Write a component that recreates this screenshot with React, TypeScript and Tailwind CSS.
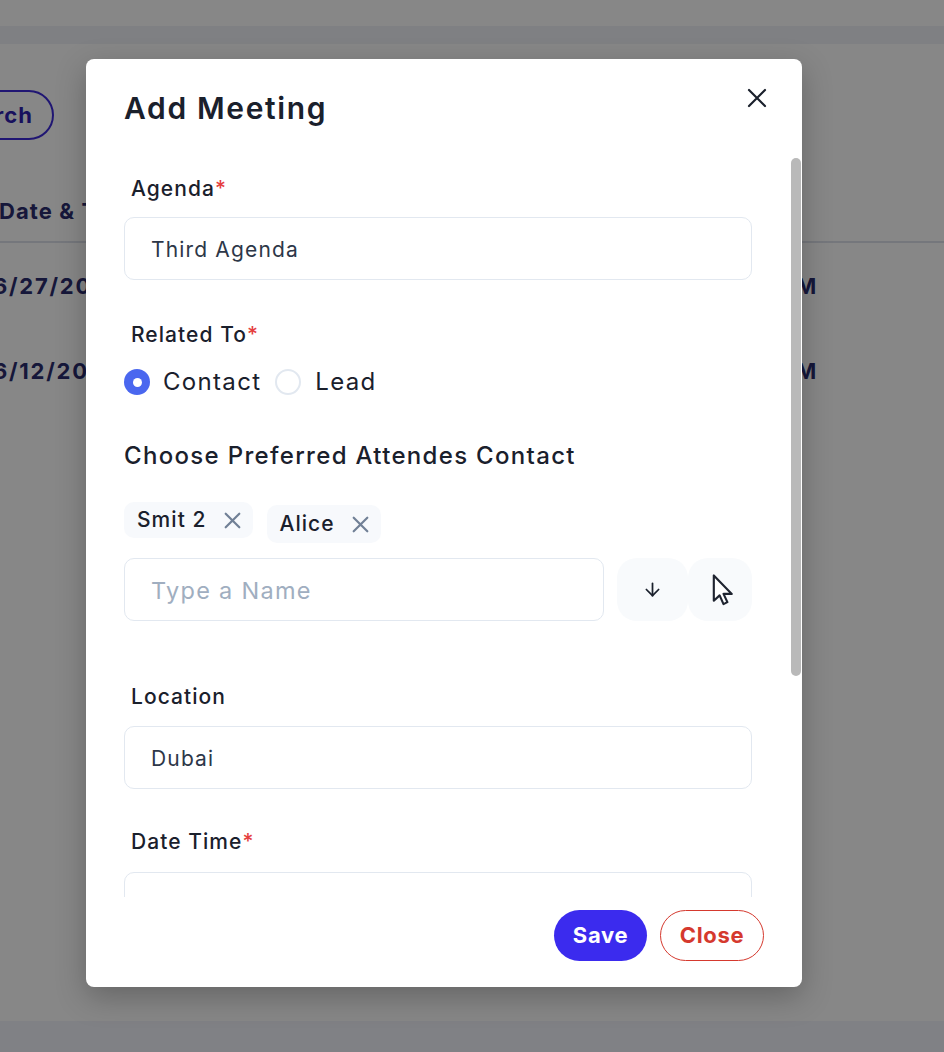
import { ArrowDown } from "lucide-react";

function CrossIcon({ className }: { className?: string }) {
  return (
    <svg viewBox="0 0 20 20" className={className} fill="none" stroke="currentColor" strokeLinecap="round">
      <path d="M2 2 L18 18 M18 2 L2 18" />
    </svg>
  );
}

function Label({ text, required }: { text: string; required?: boolean }) {
  return (
    <div className="pl-[7px] pt-[1px] text-[21px] leading-[28px] font-medium tracking-[0.05em] text-[#1a202c]">
      {text}
      {required && <span className="text-[#e53e3e]">*</span>}
    </div>
  );
}

function TextBox({ value, placeholder, className }: { value?: string; placeholder?: string; className?: string }) {
  return (
    <div
      className={`flex h-[63px] items-center rounded-[10px] border border-[#e2e8f0] bg-white px-[26px] pt-[3px] tracking-[0.055em] ${
        value ? "text-[21px] text-[#2d3748]" : "text-[23.5px] text-[#a0aec0]"
      } ${className ?? "w-full"}`}
    >
      {value ?? placeholder}
    </div>
  );
}

function Chip({ name, className }: { name: string; className?: string }) {
  return (
    <div
      className={`flex items-center gap-[17px] rounded-[10px] bg-[#f7f9fc] pl-[13px] pr-[12px] text-[21px] font-medium tracking-[0.05em] text-[#1a202c] ${
        className ?? ""
      }`}
    >
      {name}
      <CrossIcon className="size-[17px] stroke-[2.6] text-[#718096]" />
    </div>
  );
}

function MeetingModal() {
  return (
    <div className="absolute left-[86px] top-[59px] flex h-[928px] w-[716px] flex-col rounded-[8px] bg-white shadow-[0_10px_30px_rgba(0,0,0,0.25)]">
      <div className="flex h-[91px] items-start justify-between pl-[38px] pr-[35px] pt-[31px]">
        <h2 className="text-[30px] leading-[36px] font-semibold tracking-[0.055em] text-[#1a202c]">Add Meeting</h2>
        <button className="mt-[-2px] text-[#1a202c]">
          <CrossIcon className="size-[20px] stroke-[2.2]" />
        </button>
      </div>

      <div className="relative h-[747px] overflow-hidden">
        <div className="pl-[38px] pr-[50px] pt-[24px]">
          <Label text="Agenda" required />
          <TextBox value="Third Agenda" className="mt-[14px] w-full" />

          <div className="mt-[40px]">
            <Label text="Related To" required />
          </div>
          <div className="mt-[17px] flex h-[32px] items-center text-[24px] tracking-[0.055em] text-[#1a202c]">
            <span className="flex size-[26px] items-center justify-center rounded-full bg-[#4a67ef]">
              <span className="size-[9px] rounded-full bg-white" />
            </span>
            <span className="ml-[13px]">Contact</span>
            <span className="ml-[14px] size-[26px] rounded-full border-2 border-[#e2e8f0]" />
            <span className="ml-[14px]">Lead</span>
          </div>

          <div className="mt-[42px] text-[24px] leading-[32px] font-medium tracking-[0.055em] text-[#1a202c]">
            Choose Preferred Attendes Contact
          </div>
          <div className="mt-[30px] flex items-start gap-[14px]">
            <Chip name="Smit 2" className="h-[36px]" />
            <Chip name="Alice" className="mt-[3px] h-[38px]" />
          </div>
          <div className="mt-[15px] flex items-center">
            <TextBox placeholder="Type a Name" className="w-[480px]" />
            <div className="ml-[13px] flex">
              <button className="flex h-[63px] w-[71px] items-center justify-center rounded-[20px] bg-[#f8fafc] text-[#1a202c]">
                <ArrowDown className="size-[21px]" strokeWidth={2} />
              </button>
              <button className="relative flex h-[63px] w-[64px] items-center justify-center rounded-[20px] bg-[#f8fafc]">
                <svg viewBox="0 0 24 34" className="absolute left-[24px] top-[16px] h-[33px] w-[24px]">
                  <path
                    d="M1.5 1.5 L1.5 27.5 L7.5 22 L11.5 31 L15.5 29 L11.5 20.5 L20 20.5 Z"
                    fill="white"
                    stroke="#1f2430"
                    strokeWidth="2.2"
                    strokeLinejoin="round"
                  />
                </svg>
              </button>
            </div>
          </div>

          <div className="mt-[61px]">
            <Label text="Location" />
          </div>
          <TextBox value="Dubai" className="mt-[15px] w-full" />

          <div className="mt-[38px]">
            <Label text="Date Time" required />
          </div>
          <TextBox value=" " className="mt-[16px] w-full" />
          <div className="h-[300px]" />
        </div>
        <div className="absolute right-[1px] top-[8px] h-[518px] w-[10px] rounded-full bg-[#b9b9b9]" />
      </div>

      <div className="flex flex-1 items-start justify-end gap-[13px] px-[38px] pt-[13px]">
        <button className="h-[51px] w-[93px] rounded-full bg-[#3b2bee] text-[22px] font-bold tracking-[0.03em] text-white">
          Save
        </button>
        <button className="h-[51px] w-[104px] rounded-full border border-[#d5392e] text-[22px] font-bold tracking-[0.03em] text-[#d5392e]">
          Close
        </button>
      </div>
    </div>
  );
}

export default function App() {
  return (
    <div className="relative flex h-[1052px] w-[944px] flex-col overflow-hidden bg-white font-['Inter',sans-serif]">
      <div className="h-[26px]" />
      <div className="h-[18px] bg-[#f0f1f8]" />
      <div className="mt-[46px]">
        <button className="ml-[-71px] h-[50px] rounded-full border-2 border-[#3d2bd9] pl-[20px] pr-[19px] text-[22px] font-bold tracking-[0.05em] text-[#2f1fb0]">
          Search
        </button>
      </div>
      <div className="mt-[55px] flex h-[48px] items-start border-b-2 border-[#dde1ea] text-[22px] leading-[32px] font-bold tracking-[0.05em] text-[#2a2c6e]">
        <span className="ml-[-1px]">Date &amp; Time</span>
      </div>
      <div className="mt-[27px] flex items-center justify-between pr-[126px] text-[22px] leading-[32px] font-bold tracking-[0.08em] text-[#2a2c6e]">
        <span className="ml-[-7px]">6/27/2024</span>
        <span>10:00 AM</span>
      </div>
      <div className="mt-[53px] flex items-center justify-between pr-[126px] text-[22px] leading-[32px] font-bold tracking-[0.08em] text-[#2a2c6e]">
        <span className="ml-[-7px]">6/12/2024</span>
        <span>11:30 AM</span>
      </div>
      <div className="flex-1" />
      <div className="h-[31px] bg-[#f2f4fb]" />

      <div className="absolute inset-0 bg-black/[0.47]" />
      <MeetingModal />
    </div>
  );
}
